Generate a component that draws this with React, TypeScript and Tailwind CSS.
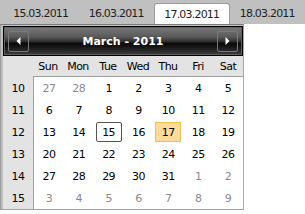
import React from "react";

type Day = { d: number; other?: boolean };

const weeks: { wk: number; days: Day[] }[] = [
  { wk: 10, days: [{ d: 27, other: true }, { d: 28, other: true }, { d: 1 }, { d: 2 }, { d: 3 }, { d: 4 }, { d: 5 }] },
  { wk: 11, days: [6, 7, 8, 9, 10, 11, 12].map((d) => ({ d })) },
  { wk: 12, days: [13, 14, 15, 16, 17, 18, 19].map((d) => ({ d })) },
  { wk: 13, days: [20, 21, 22, 23, 24, 25, 26].map((d) => ({ d })) },
  { wk: 14, days: [{ d: 27 }, { d: 28 }, { d: 29 }, { d: 30 }, { d: 31 }, { d: 1, other: true }, { d: 2, other: true }] },
  { wk: 15, days: [3, 4, 5, 6, 7, 8, 9].map((d) => ({ d, other: true })) },
];

const tabs = ["15.03.2011", "16.03.2011", "17.03.2011", "18.03.2011"];
const dayNames = ["Sun", "Mon", "Tue", "Wed", "Thu", "Fri", "Sat"];

function NavButton({ dir }: { dir: "left" | "right" }) {
  return (
    <div className="w-[21px] h-[21px] border border-[#7a7a7a] rounded-[2px] flex items-center justify-center">
      <svg width="5" height="8" viewBox="0 0 5 8">
        {dir === "left" ? (
          <polygon points="4.5,0 0.5,4 4.5,8" fill="#ffffff" />
        ) : (
          <polygon points="0.5,0 4.5,4 0.5,8" fill="#ffffff" />
        )}
      </svg>
    </div>
  );
}

export default function App() {
  return (
    <div className="w-[305px] h-[214px] bg-white overflow-hidden font-['DejaVu_Sans',sans-serif] text-[11px] leading-none tracking-[-0.5px]">
      {/* Tab strip */}
      <div className="h-[24px] bg-[#c0c0c0] flex items-end pl-[3px] tracking-[-0.8px]">
        {tabs.map((t, i) =>
          i === 2 ? (
            <div
              key={t}
              className="w-[76px] h-[21px] bg-white border border-b-0 border-[#9a9a9a] rounded-t-[3px] flex items-center justify-center text-[#1e1e1e]"
            >
              {t}
            </div>
          ) : (
            <div key={t} className="w-[76px] h-[21px] flex items-center justify-center text-[#1e1e1e]">
              {t}
            </div>
          )
        )}
      </div>

      {/* Calendar */}
      <div className="w-[244px] bg-[#c0c0c0] border-t border-t-[#7c7c7c] border-l border-l-[#9c9c9c] border-r border-r-[#a8a8a8] border-b border-b-[#a0a0a0] pl-[2px] pt-[1px]">
        {/* Header */}
        <div className="h-[30px] border border-black bg-[linear-gradient(to_bottom,#7a7a7a_0%,#5a5a5a_35%,#2e2e2e_52%,#0a0a0a_58%,#151515_70%,#3e3e3e_100%)] shadow-[inset_0_0_0_1px_#5e5e5e] flex items-center justify-between px-[4px]">
          <NavButton dir="left" />
          <div className="text-white font-bold text-[11px] tracking-normal">March - 2011</div>
          <NavButton dir="right" />
        </div>

        {/* Day names */}
        <div className="h-[20px] bg-[#e3e3e3] flex">
          <div className="w-[30px]" />
          <div className="flex-1 grid grid-cols-7">
            {dayNames.map((n) => (
              <div key={n} className="flex items-center justify-center text-black">
                {n}
              </div>
            ))}
          </div>
        </div>

        {/* Body */}
        <div className="flex bg-[#e3e3e3]">
          <div className="w-[30px] pt-[1px] flex flex-col">
            {weeks.map((w) => (
              <div key={w.wk} className="h-[22px] flex items-center justify-center text-black">
                {w.wk}
              </div>
            ))}
          </div>
          <div className="flex-1 bg-white border-l border-t border-[#a0a0a0] grid grid-cols-7">
            {weeks.map((w, wi) =>
              w.days.map((day, di) => {
                const isSel = wi === 2 && day.d === 15;
                const isToday = wi === 2 && day.d === 17;
                return (
                  <div key={`${wi}-${di}`} className="h-[22px] flex items-center justify-center">
                    {isSel ? (
                      <span className="w-[26px] h-[20px] border border-[#555555] rounded-[2px] flex items-center justify-center text-black">
                        {day.d}
                      </span>
                    ) : isToday ? (
                      <span className="w-[26px] h-[20px] border border-[#f3c24c] bg-[#fddb9c] flex items-center justify-center text-black">
                        {day.d}
                      </span>
                    ) : (
                      <span className={day.other ? "text-[#8a8a8a]" : "text-black"}>{day.d}</span>
                    )}
                  </div>
                );
              })
            )}
          </div>
        </div>
      </div>
    </div>
  );
}
